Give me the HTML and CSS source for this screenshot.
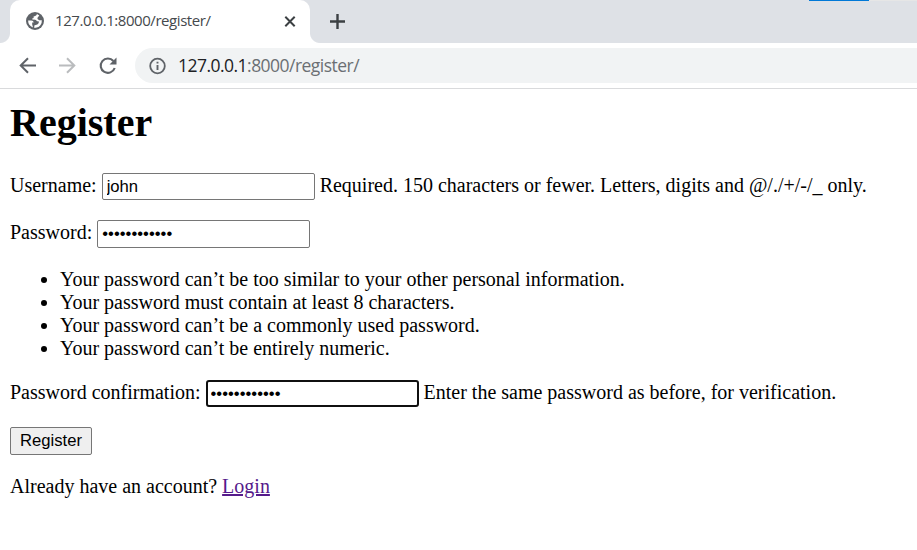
FILE: index.html
```html
<!DOCTYPE html>
<html lang="en">
<head>
<meta charset="utf-8">
<title>Register</title>
<link rel="stylesheet" href="styles.css">
</head>
<body>
<header class="browser">
  <div class="tabstrip">
    <span class="progress"></span><span class="edge"></span>
    <div class="tab">
      <svg class="globe" width="18" height="18" viewBox="0 0 18 18"><circle cx="9" cy="9" r="9" fill="#5f6368"/><path d="M11 2.1Q10.6 3.8 9.2 4L7.6 4.4V6L6 6.8Q6.4 7.8 7.8 7.6Q10.6 7.6 11 9.3H12.6Q13.2 10 12.4 11.4Q11.6 12.8 9.6 13L8.3 13.6V16Q13.8 15.8 15.6 11L15.8 8.2H13.2L11.5 7V5.8L13.3 3.6ZM2.1 8.5H5.3Q7.6 8.8 7.7 10.4H6.2V12.6L7 15.4Q2.1 13.8 2.1 8.5Z" fill="#fff"/></svg>
      <span class="tab-title">127.0.0.1:8000/register/</span>
      <svg class="close" width="12" height="12" viewBox="0 0 12 12"><path d="M1.3 .8 10.7 10.2M10.7 .8 1.3 10.2" stroke="#3c4043" stroke-width="2"/></svg>
    </div>
    <svg class="plus" width="16" height="16" viewBox="0 0 16 16"><path d="M8.5 0V15M1 7.5H16" stroke="#3c4043" stroke-width="2.4"/></svg>
  </div>
  <nav class="toolbar">
    <svg class="back" width="18" height="18" viewBox="0 0 18 18"><path d="M17 8.5H2M9 1.2 1.7 8.5 9 15.8" fill="none" stroke="#5f6368" stroke-width="2"/></svg>
    <svg class="forward" width="18" height="18" viewBox="0 0 18 18"><path d="M1 8.5H16M9 1.2 16.3 8.5 9 15.8" fill="none" stroke="#babcbe" stroke-width="2"/></svg>
    <svg class="reload" width="18" height="18" viewBox="0 0 18 18"><path d="M14.4 4A7.2 7.2 0 1 0 15.7 11" fill="none" stroke="#5f6368" stroke-width="2.1"/><path d="M17.5 .5V7.5H10.5Z" fill="#5f6368"/></svg>
    <div class="address">
      <svg width="18" height="18" viewBox="0 0 18 18"><circle cx="9.5" cy="9" r="7.3" fill="none" stroke="#5f6368" stroke-width="1.8"/><path d="M9.5 8V13M9.5 4.7V6.5" stroke="#5f6368" stroke-width="1.9"/></svg>
      <span class="url">127.0.0.1<span class="path">:8000/register/</span></span>
    </div>
  </nav>
</header>
<main>
  <h1>Register</h1>
  <form>
    <div class="row"><label for="username">Username:</label><input id="username" type="text" value="john"><span class="hint">Required. 150 characters or fewer. Letters, digits and @/./+/-/_ only.</span></div>
    <div class="row tall"><label for="password">Password:</label><input id="password" type="password" value="abcdefghijkl"></div>
    <ul>
      <li>Your password can’t be too similar to your other personal information.</li>
      <li>Your password must contain at least 8 characters.</li>
      <li>Your password can’t be a commonly used password.</li>
      <li>Your password can’t be entirely numeric.</li>
    </ul>
    <div class="row"><label for="confirm">Password confirmation:</label><input id="confirm" class="active" type="password" value="abcdefghijkl"><span class="hint">Enter the same password as before, for verification.</span></div>
    <button type="button">Register</button>
  </form>
  <p>Already have an account? <a href="#">Login</a></p>
</main>
</body>
</html>
```
FILE: styles.css
```css
* { box-sizing: border-box; }
body {
  margin: 0;
  height: 550px;
  overflow: hidden;
  background: #fff;
  color: #000;
  font: 20px/23px "Liberation Serif", serif;
}
svg { display: block; flex: none; }
.browser {
  height: 89px;
  border-bottom: 1px solid #d9dadc;
  font-family: "Open Sans", sans-serif;
}
.tabstrip {
  position: relative;
  display: flex;
  align-items: center;
  height: 43px;
  padding-left: 10px;
  background: #dee1e6;
}
.progress, .edge {
  position: absolute;
  top: 0;
  left: 809px;
  width: 60px;
  height: 1px;
  background: #0078d7;
}
.edge { left: 869px; width: 48px; background: #e6e6e6; }
.tab {
  position: relative;
  display: flex;
  align-items: center;
  width: 300px;
  height: 43px;
  padding: 0 14px 0 16px;
  border-radius: 10px 10px 0 0;
  background: #fff;
}
.globe { margin-top: -1px; }
.tab::before, .tab::after {
  content: "";
  position: absolute;
  bottom: 0;
  width: 10px;
  height: 10px;
}
.tab::before { left: -10px; background: radial-gradient(circle at 0 0, #dee1e6 9.5px, #fff 10.5px); }
.tab::after { right: -10px; background: radial-gradient(circle at 100% 0, #dee1e6 9.5px, #fff 10.5px); }
.tab-title {
  margin: -2px 0 0 11px;
  color: #45494d;
  font-size: 15px;
  letter-spacing: -0.44px;
  white-space: nowrap;
}
.close { margin-left: auto; }
.plus { margin-left: 19px; }
.toolbar {
  display: flex;
  align-items: center;
  height: 45px;
  padding-left: 19px;
}
.forward { margin-left: 21px; }
.reload { margin-left: 23px; }
.address {
  display: flex;
  align-items: center;
  flex: 1;
  height: 35px;
  margin-left: 18px;
  padding-left: 13px;
  border-radius: 18px 0 0 18px;
  background: #f1f3f4;
}
.url {
  margin-left: 12px;
  color: #202124;
  font-size: 17.5px;
  letter-spacing: -0.53px;
  white-space: nowrap;
}
.path { color: #6b6f73; }
main { padding: 11px 10px 0; }
h1 { margin: 0 0 27px; font-size: 40px; line-height: 46px; }
.row {
  display: flex;
  align-items: center;
  gap: 5px;
  height: 27px;
  margin-bottom: 20px;
  white-space: nowrap;
}
.row label, .hint { margin-bottom: 2px; }
.row.tall, .tall input { height: 28px; }
.row.tall label { margin-bottom: 3px; }
input {
  width: 213px;
  height: 27px;
  margin: 0;
  padding: 1px 4px;
  border: 1px solid #767676;
  border-radius: 2px;
  background: #fff;
  color: #000;
  font: 16.67px "Liberation Sans", sans-serif;
}
input.active { padding: 0 3px; border: 2px solid #101010; border-radius: 3px; }
ul { margin: 20px 0 20px; padding-left: 50px; }
.row.tall { margin-bottom: 0; }
button {
  display: block;
  width: 82px;
  height: 28px;
  padding: 0;
  border: 1px solid #767676;
  border-radius: 2px;
  background: #efefef;
  color: #000;
  font: 16.67px "Liberation Sans", sans-serif;
}
p { margin: 20px 0 0; }
a { color: #551a8b; }
```
